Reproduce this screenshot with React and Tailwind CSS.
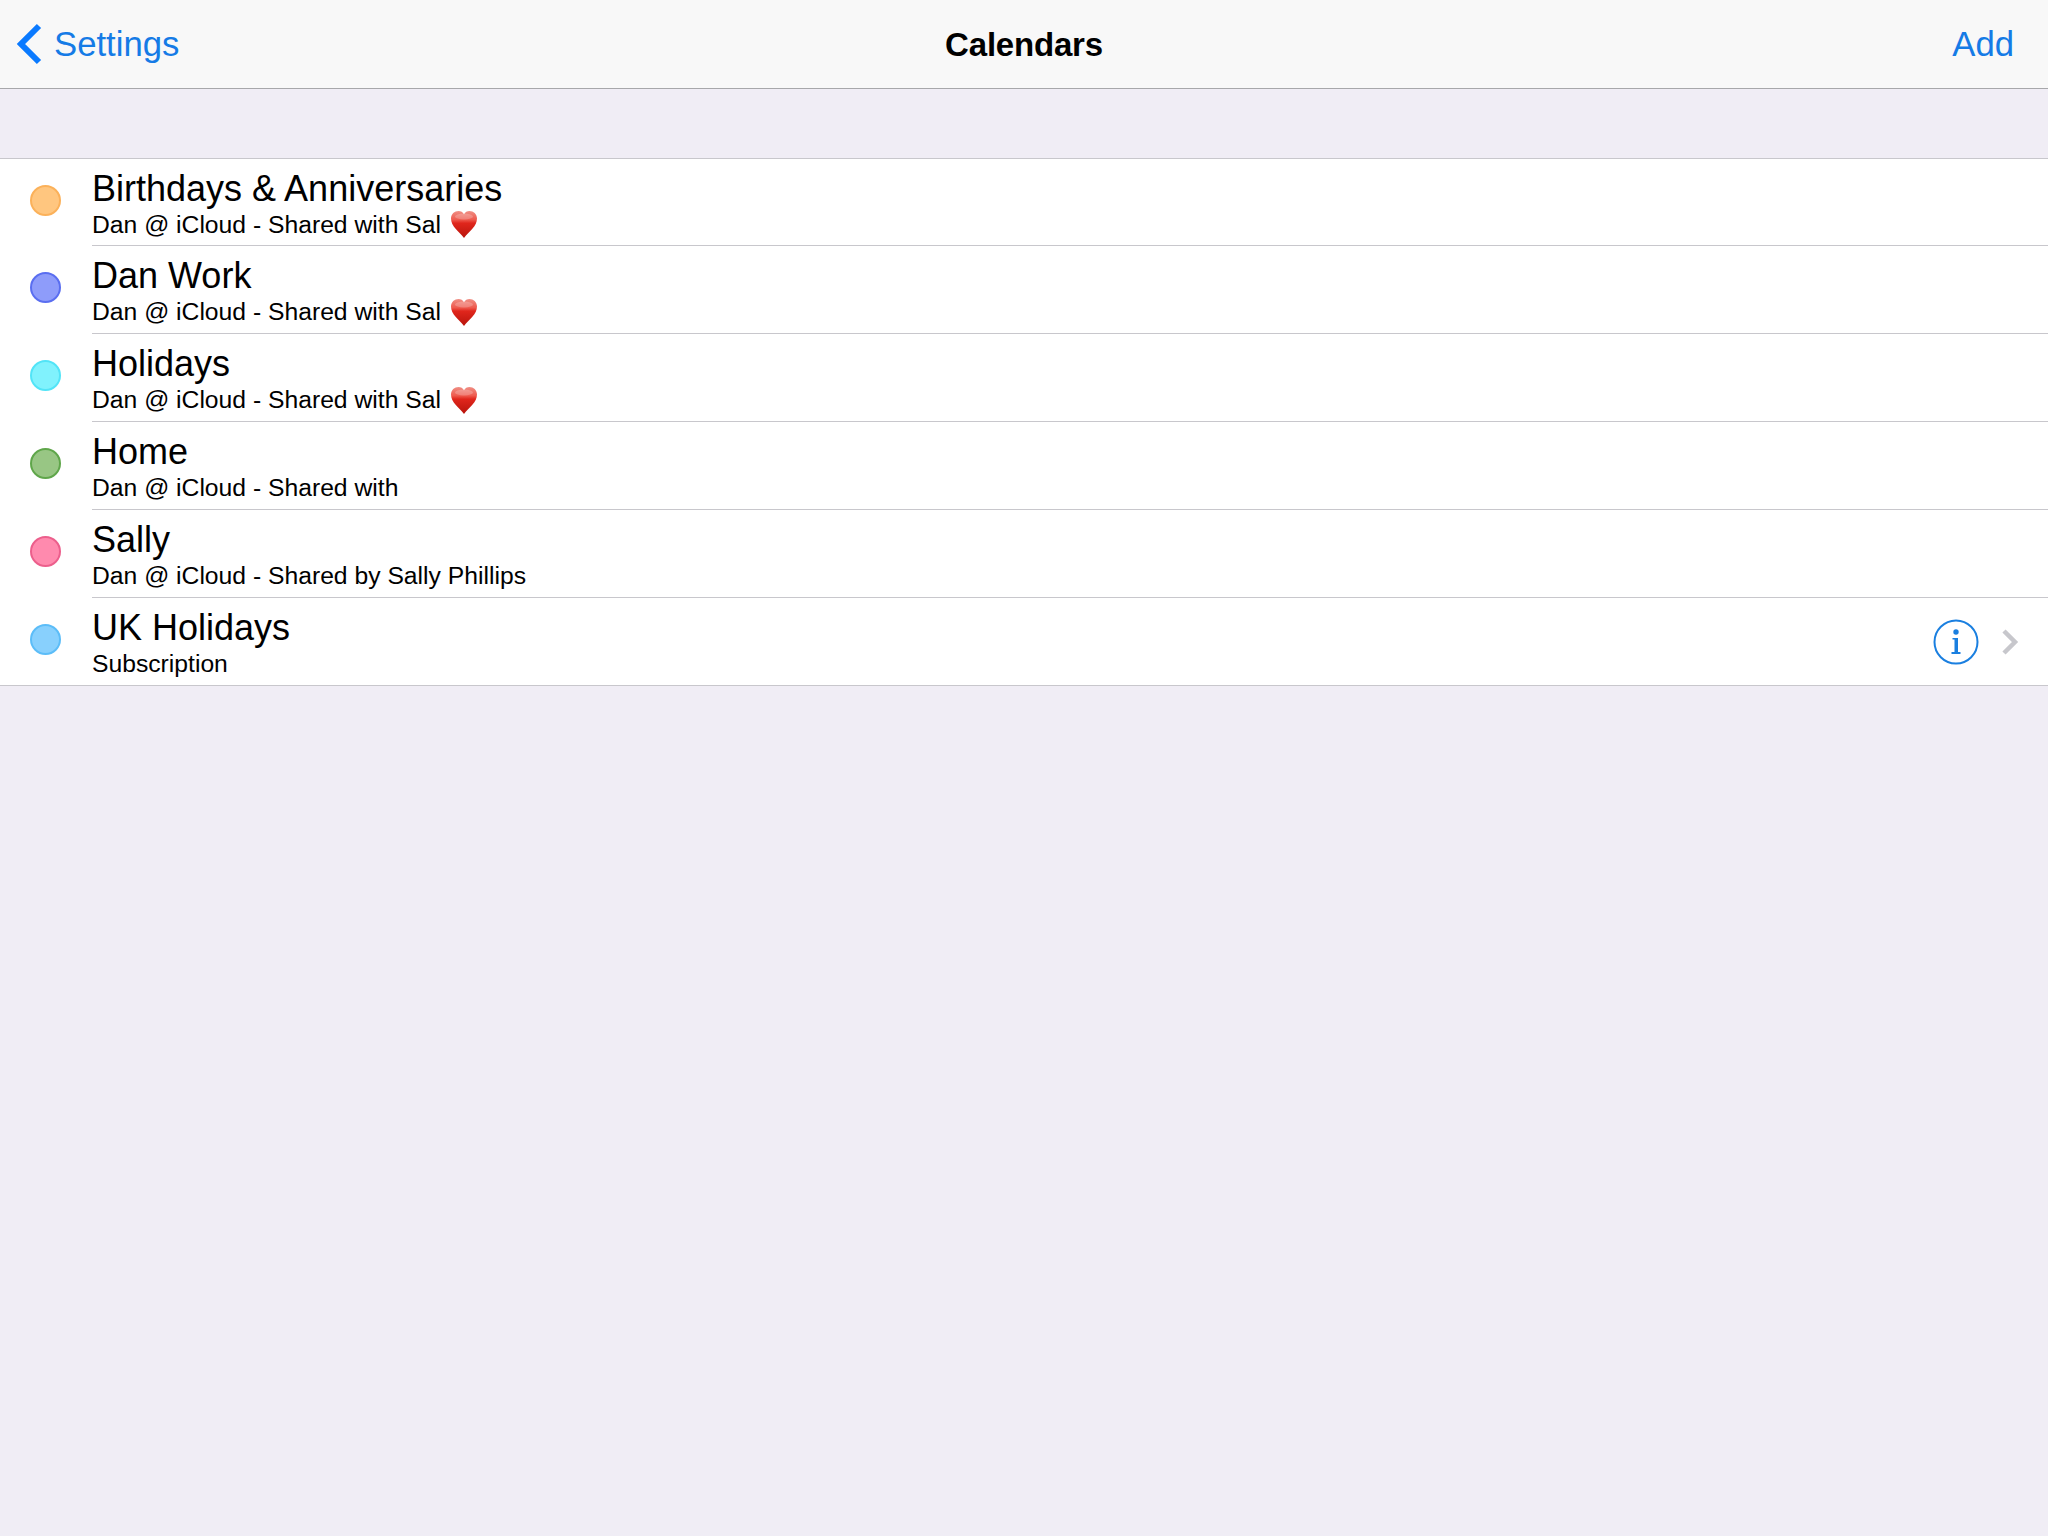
const rows = [
  { title: 'Birthdays & Anniversaries', sub: 'Dan @ iCloud - Shared with Sal', heart: true, fill: 'bg-[#ffc67f]', ring: 'border-[#fbb15a]' },
  { title: 'Dan Work', sub: 'Dan @ iCloud - Shared with Sal', heart: true, fill: 'bg-[#8e9cfa]', ring: 'border-[#5a6ef0]' },
  { title: 'Holidays', sub: 'Dan @ iCloud - Shared with Sal', heart: true, fill: 'bg-[#80f2fd]', ring: 'border-[#52e4f7]' },
  { title: 'Home', sub: 'Dan @ iCloud - Shared with', fill: 'bg-[#98c684]', ring: 'border-[#5fa64a]' },
  { title: 'Sally', sub: 'Dan @ iCloud - Shared by Sally Phillips', fill: 'bg-[#ff8aae]', ring: 'border-[#ec5f8c]' },
  { title: 'UK Holidays', sub: 'Subscription', info: true, fill: 'bg-[#88d0fd]', ring: 'border-[#5cbdf8]' },
];

const Heart = () => (
  <svg width="26" height="27" viewBox="0 0 26 27" className="ml-[10px] shrink-0">
    <defs>
      <linearGradient id="heartFill" x1="0" y1="0" x2="0" y2="1">
        <stop offset="0" stopColor="#f08f85" />
        <stop offset="0.32" stopColor="#ee5a4e" />
        <stop offset="0.45" stopColor="#e0261c" />
        <stop offset="1" stopColor="#b8140c" />
      </linearGradient>
    </defs>
    <path d="M13 27C8 20.500 0 15.500 0 7.500C0 3 3.500 0 7.500 0C9.800 0 12 1.200 13 3.300C14 1.200 16.200 0 18.500 0C22.500 0 26 3 26 7.500C26 15.500 18 20.500 13 27Z" fill="url(#heartFill)" />
    <ellipse cx="13" cy="5.500" rx="9" ry="3" fill="#fff" opacity="0.22" />
  </svg>
);

const Row = ({ row, index }) => (
  <div className={`flex bg-white ${index === 0 ? 'h-[87px]' : 'h-[88px]'} ${index === rows.length - 1 ? 'border-b border-[#c8c7cc]' : ''}`}>
    <div className="w-[92px] shrink-0 flex items-center">
      <div className={`ml-[30px] mb-[5px] w-[31px] h-[31px] rounded-full border-2 ${row.fill} ${row.ring}`} />
    </div>
    <div className={`flex-1 flex items-center ${index === rows.length - 1 ? '' : 'border-b border-[#c8c7cc]'}`}>
      <div className="flex-1 pt-[3px]">
        <div className="text-[36px] leading-[42px] text-black">{row.title}</div>
        <div className="flex items-center h-[30px] text-[24.7px] leading-[30px] text-black">
          {row.sub}
          {row.heart && <Heart />}
        </div>
      </div>
      {row.info && (
        <div className="flex items-center mr-[29px]">
          <svg width="46" height="46" viewBox="0 0 46 46">
            <circle cx="23" cy="23" r="21.500" fill="none" stroke="#1a7fe0" strokeWidth="2" />
            <circle cx="23" cy="13" r="2.700" fill="#1a7fe0" />
            <path d="M19.500 19H25V33H27.500V35H18.500V33H21.500V20.500H19.500Z" fill="#1a7fe0" />
          </svg>
          <svg width="18" height="28" viewBox="0 0 18 28" className="ml-[22px]">
            <path d="M3 3L14 14L3 25" fill="none" stroke="#c7c7cc" strokeWidth="4.500" />
          </svg>
        </div>
      )}
    </div>
  </div>
);

const App = () => {
  return (
    <div className="min-h-screen bg-[#f0edf5] font-['Liberation_Sans',sans-serif]">
      <div className="h-[89px] bg-[#f8f8f8] border-b border-[#a7a7aa] flex items-center justify-between relative">
        <div className="flex items-center text-[34.7px] text-[#157be6]">
          <svg width="26" height="42" viewBox="0 0 26 42" className="ml-[16px] mr-[12px]">
            <path d="M23 3L5 21L23 39" fill="none" stroke="#0a7aff" strokeWidth="6" />
          </svg>
          Settings
        </div>
        <div className="absolute inset-x-0 mt-[2px] text-center text-[33px] tracking-[-0.2px] font-bold text-black pointer-events-none">Calendars</div>
        <div className="mr-[34px] text-[34.7px] text-[#157be6]">Add</div>
      </div>
      <div className="h-[69px]" />
      <div className="border-t border-[#c8c7cc]">
        {rows.map((row, i) => (
          <Row key={row.title} row={row} index={i} />
        ))}
      </div>
    </div>
  );
};

export default App;
